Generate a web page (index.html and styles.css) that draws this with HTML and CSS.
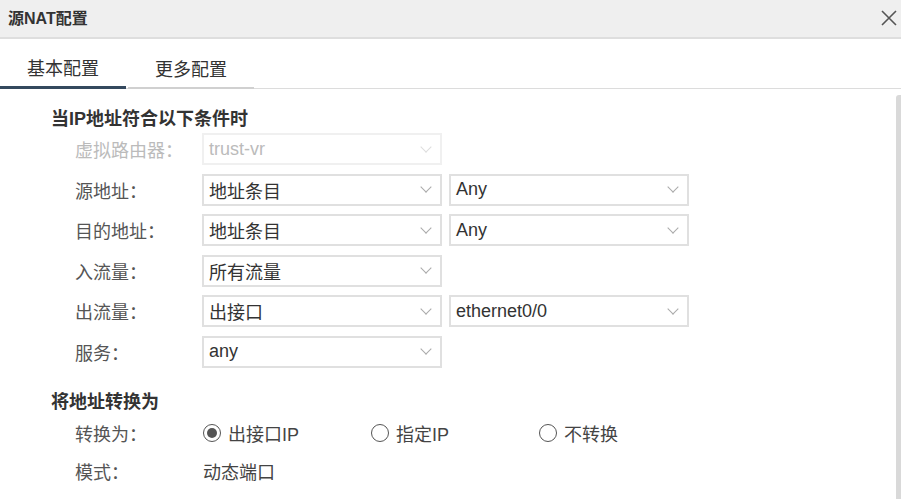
FILE: index.html
```html
<!DOCTYPE html>
<html lang="zh">
<head>
<meta charset="utf-8">
<title>源NAT配置</title>
<link rel="stylesheet" href="styles.css">
</head>
<body>
<div class="dialog">
  <div class="header">
    <span class="title">源NAT配置</span>
    <svg class="close" width="16" height="16" viewBox="0 0 16 16"><path d="M1 1L15 15M15 1L1 15" stroke="#555" stroke-width="1.6" fill="none"/></svg>
  </div>
  <div class="tabs">
    <div class="tab active">基本配置</div>
    <div class="tab">更多配置</div>
  </div>
  <div class="content">
    <div class="scrollbar"></div>
    <div class="section-title">当IP地址符合以下条件时</div>
    <div class="rows">
      <div class="row disabled">
        <span class="label">虚拟路由器：</span>
        <div class="select"><span>trust-vr</span><i class="chev"></i></div>
      </div>
      <div class="row">
        <span class="label">源地址：</span>
        <div class="select"><span>地址条目</span><i class="chev"></i></div>
        <div class="select"><span>Any</span><i class="chev"></i></div>
      </div>
      <div class="row">
        <span class="label">目的地址：</span>
        <div class="select"><span>地址条目</span><i class="chev"></i></div>
        <div class="select"><span>Any</span><i class="chev"></i></div>
      </div>
      <div class="row">
        <span class="label">入流量：</span>
        <div class="select"><span>所有流量</span><i class="chev"></i></div>
      </div>
      <div class="row">
        <span class="label">出流量：</span>
        <div class="select"><span>出接口</span><i class="chev"></i></div>
        <div class="select"><span>ethernet0/0</span><i class="chev"></i></div>
      </div>
      <div class="row">
        <span class="label">服务：</span>
        <div class="select"><span>any</span><i class="chev"></i></div>
      </div>
    </div>
    <div class="section-title second">将地址转换为</div>
    <div class="row plain radio-row">
      <span class="label">转换为：</span>
      <label class="radio checked"><i class="dot"></i>出接口IP</label>
      <label class="radio"><i class="dot"></i>指定IP</label>
      <label class="radio"><i class="dot"></i>不转换</label>
    </div>
    <div class="row plain mode-row">
      <span class="label">模式：</span>
      <span class="value">动态端口</span>
    </div>
  </div>
</div>
</body>
</html>
```

FILE: styles.css
```css
* { box-sizing: border-box; }
html, body { margin: 0; padding: 0; background: #fff; }
body {
  font-family: "Liberation Sans", "Noto Sans CJK SC", sans-serif;
  color: #333;
  width: 901px;
  height: 499px;
  overflow: hidden;
}
.dialog { width: 901px; height: 499px; display: flex; flex-direction: column; }

.header {
  height: 39px;
  background: #efefef;
  border-bottom: 2px solid #dedede;
  display: flex;
  align-items: center;
  justify-content: space-between;
  padding: 0 4px 3px 8px;
}
.title { font-size: 16px; font-weight: bold; color: #333; }
.close { display: block; margin-top: 1px; }

.tabs {
  height: 50px;
  display: flex;
  align-items: flex-end;
  border-bottom: 1px solid #dcdcdc;
}
.tab {
  width: 126px;
  margin-right: 2px;
  height: 33px;
  padding-top: 2px;
  text-align: center;
  font-size: 18px;
  line-height: 24px;
  color: #333;
  border-bottom: 2px solid #d0d0d0;
  margin-bottom: -1px;
}
.tab.active {
  border-bottom: 3px solid #34495e;
  height: 34px;
}

.content {
  position: relative;
  flex: 1;
  padding: 18px 0 0 51px;
}
.scrollbar {
  position: absolute;
  right: 0;
  top: 6px;
  bottom: 0;
  width: 5px;
  background: #d9d9d9;
  border-radius: 3px 0 0 0;
}

.section-title {
  font-size: 18px;
  font-weight: bold;
  line-height: 24px;
  color: #333;
}
.section-title.second { margin-top: 22px; }

.rows {
  display: flex;
  flex-direction: column;
  gap: 8.5px;
  margin-top: 2px;
}
.row {
  display: flex;
  align-items: center;
  padding-left: 24px;
  height: 32px;
}
.label {
  width: 126px;
  flex: none;
  font-size: 18px;
  color: #555;
}
.select {
  width: 240px;
  height: 32px;
  border: 2px solid #e0e0e0;
  margin-left: 1px;
  margin-right: 6px;
  display: flex;
  align-items: center;
  justify-content: space-between;
  padding: 0 4px 0 5px;
  font-size: 18px;
  color: #333;
}
.chev {
  display: block;
  width: 8px;
  height: 8px;
  border-right: 1px solid #aaa;
  border-bottom: 1px solid #aaa;
  transform: rotate(45deg);
  margin: -5px 6px 0 0;
}
.row.disabled .label { color: #bbb; }
.row.disabled .select { border-color: #f0f0f0; color: #bbb; }
.row.disabled .chev { border-color: #ddd; }

.radio-row { margin-top: 3px; height: 32px; }
.mode-row { margin-top: 6px; }
.radio {
  width: 168px;
  display: flex;
  align-items: center;
  font-size: 18px;
  color: #444;
  flex: none;
}
.radio:first-of-type { margin-left: 2px; }
.dot {
  width: 18px;
  height: 18px;
  border: 1.6px solid #555;
  border-radius: 50%;
  margin-right: 7px;
  flex: none;
  display: flex;
  align-items: center;
  justify-content: center;
}
.radio.checked .dot::after {
  content: "";
  width: 10px;
  height: 10px;
  border-radius: 50%;
  background: #555;
}
.value { font-size: 18px; color: #444; margin-left: 2px; }
```
